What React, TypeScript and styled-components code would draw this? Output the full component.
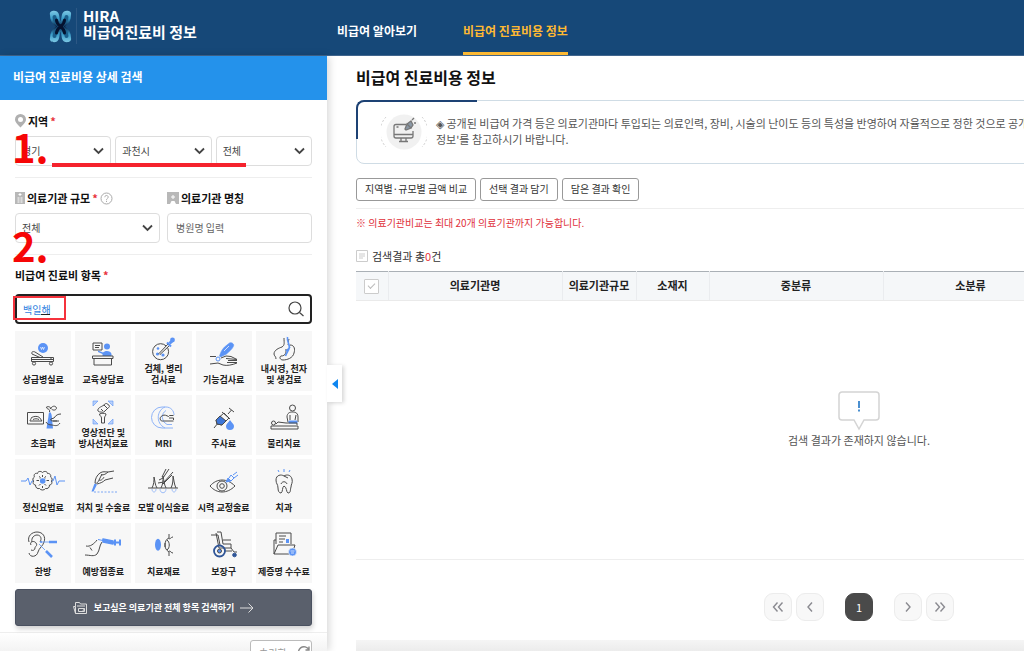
import React, { useState } from "react";
import styled, { createGlobalStyle, css } from "styled-components";

const INK = "#4a4a4a";
const BLUE = "#5b93f5";

const GlobalStyle = createGlobalStyle`
  *, *::before, *::after { box-sizing: border-box; }
  html, body { margin: 0; height: 100%; overflow: hidden; }
  body, button, input, select {
    font-family: "Noto Sans CJK KR", "Noto Sans", sans-serif;
  }
  body { background: #fff; color: #222; }
  button { cursor: pointer; }
`;

const Page = styled.div`
  display: flex;
  flex-direction: column;
  height: 100vh;
  overflow: hidden;
`;

/* ---------- top bar ---------- */

const TopBar = styled.header`
  display: flex;
  flex: none;
  height: 56px;
  background: #164878;
  border-bottom: 1px solid #41668e;
`;

const Brand = styled.a`
  display: flex;
  align-items: center;
  gap: 4px;
  width: 337px;
  padding: 0 0 3px 49px;
  color: #fff;
  text-decoration: none;
`;

const BrandText = styled.span`
  padding: 0 0 4px 6px;
  border-left: 1px solid #2c5784;
  font-size: 15px;
  line-height: 16px;
  font-weight: 700;
`;

const Nav = styled.nav`
  display: flex;
  gap: 46px;
`;

const NavLink = styled.a<{ $active?: boolean }>`
  display: flex;
  align-items: center;
  padding-top: ${(p) => (p.$active ? "9px" : "6px")};
  border-bottom: ${(p) => (p.$active ? "3px solid #fdb933" : "0")};
  color: ${(p) => (p.$active ? "#fdb933" : "#fff")};
  font-size: 12px;
  font-weight: 700;
  text-decoration: none;
  white-space: nowrap;
`;

const Body = styled.div`
  display: flex;
  flex: 1;
  min-height: 0;
`;

/* ---------- search panel ---------- */

const Sidebar = styled.aside`
  position: relative;
  z-index: 1;
  flex: none;
  width: 327px;
  background: #fff;
  box-shadow: 2px 0 8px rgba(0, 0, 0, 0.16);
`;

const PanelTitle = styled.h2`
  display: flex;
  align-items: center;
  height: 44px;
  margin: 0;
  padding: 0 13px 3px;
  background: #2492eb;
  color: #fff;
  font-size: 12px;
  font-weight: 700;
`;

const PanelBody = styled.div`
  position: relative;
  padding: 1px 15px 0;
`;

const Section = styled.section<{ $last?: boolean }>`
  padding: 12px 0 11px;
  border-bottom: ${(p) => (p.$last ? "0" : "1px solid #eee")};
`;

const Label = styled.label`
  display: flex;
  align-items: center;
  gap: 2px;
  height: 16px;
  margin-bottom: 7px;
  color: #111;
  font-size: 11px;
  line-height: 16px;
  font-weight: 700;
  white-space: nowrap;
`;

const Required = styled.span`
  color: #e8323c;
`;

const Columns = styled.div<{ $count: number; $gap: number }>`
  display: grid;
  grid-template-columns: repeat(${(p) => p.$count}, 1fr);
  gap: ${(p) => p.$gap}px;
`;

const field = css`
  display: block;
  width: 100%;
  height: 30px;
  padding: 0 8px;
  border: 1px solid #ddd;
  border-radius: 4px;
  background: #fff;
  color: #444;
  font-size: 10px;
`;

const SelectWrap = styled.div`
  position: relative;
`;

const SelectBox = styled.select`
  ${field}
  padding: 0 6px 2px;
  appearance: none;
`;

const SelectArrow = styled.svg`
  position: absolute;
  top: 11px;
  right: 7px;
  pointer-events: none;
`;

const TextInput = styled.input`
  ${field}
  padding-bottom: 2px;
  &::placeholder { color: #666; opacity: 1; }
`;

const SearchRow = styled.div`
  display: flex;
  align-items: center;
  height: 30px;
  margin: 11px 0 7px;
  padding-right: 6px;
  border: 2px solid #222;
  border-radius: 4px;
`;

const SearchInput = styled.input`
  flex: 1;
  min-width: 0;
  height: 26px;
  padding: 0 6px;
  border: 0;
  outline: 0;
  background: transparent;
  color: #2f7fe0;
  font-size: 10px;
`;

const IconButton = styled.button`
  display: flex;
  padding: 0;
  border: 0;
  background: none;
`;

const Tiles = styled.div`
  display: grid;
  grid-template-columns: repeat(5, 1fr);
  gap: 4px;
`;

const Tile = styled.button<{ $tall: boolean }>`
  display: flex;
  flex-direction: column;
  align-items: center;
  justify-content: flex-end;
  gap: ${(p) => (p.$tall ? "2px" : "7px")};
  height: 60px;
  padding: 0 0 6px;
  border: 0;
  background: #f7f7f7;
  color: #222;
  font-size: 9px;
  line-height: 11px;
  font-weight: 700;
  white-space: nowrap;
`;

const SearchAll = styled.button`
  display: flex;
  align-items: center;
  justify-content: center;
  gap: 6px;
  width: 100%;
  height: 37px;
  margin-top: 6px;
  padding: 0;
  border: 1px solid #4a5160;
  border-radius: 3px;
  background: #5a606c;
  box-shadow: 1px 3px 5px rgba(0, 0, 0, 0.18);
  color: #fff;
  font-size: 9px;
  font-weight: 700;
`;

const PanelFooter = styled.div`
  display: flex;
  justify-content: flex-end;
  margin-top: -5px;
  padding: 7px 15px;
  border-top: 1px solid #eee;
  background: linear-gradient(#fff, #f2f2f2 20px);
`;

const ResetButton = styled.button`
  display: flex;
  align-items: center;
  justify-content: space-between;
  width: 62px;
  height: 24px;
  padding: 0 0 0 8px;
  border: 1px solid #bbb;
  border-radius: 3px;
  background: #fff;
  color: #999;
  font-size: 10px;
`;

const Collapse = styled.button`
  position: absolute;
  top: 309px;
  left: 100%;
  display: flex;
  align-items: center;
  justify-content: center;
  width: 15px;
  height: 37px;
  padding: 0;
  border: 0;
  background: #fff;
  box-shadow: 2px 1px 4px rgba(0, 0, 0, 0.16);
`;

/* ---------- hand-made notes over the panel ---------- */

const StepMark = styled.span<{ $top: number }>`
  position: absolute;
  top: ${(p) => p.$top}px;
  left: 12px;
  color: #f60606;
  font-size: 40px;
  line-height: 40px;
  font-weight: 700;
  pointer-events: none;
`;

const StepLine = styled.span`
  position: absolute;
  top: 63px;
  left: 52px;
  width: 194px;
  height: 4px;
  background: #f5222d;
  pointer-events: none;
`;

const StepFrame = styled.span`
  position: absolute;
  top: 196px;
  left: 13px;
  width: 53px;
  height: 24px;
  border: 2px solid #f5323c;
  pointer-events: none;
`;

const Composing = styled.span`
  position: absolute;
  top: 214px;
  left: 41px;
  width: 9px;
  height: 1px;
  background: #222;
  pointer-events: none;
`;

/* ---------- results ---------- */

const Main = styled.main`
  flex: 1;
  min-width: 0;
  overflow: hidden;
  padding-left: 29px;
`;

const MainInner = styled.div`
  min-width: 1006px;
`;

const Title = styled.h1`
  margin: 0;
  padding: 9px 0 11px;
  color: #111;
  font-size: 16px;
  line-height: 24px;
  font-weight: 700;
`;

const Notice = styled.div`
  position: relative;
  display: flex;
  align-items: center;
  gap: 9px;
  height: 64px;
  padding: 0 24px;
  border: 1px solid #cfdce5;
  border-radius: 8px;
  color: #555;
  font-size: 11px;
  line-height: 16px;
  white-space: nowrap;

  &::before {
    content: "";
    position: absolute;
    top: -1px;
    left: -1px;
    width: 121px;
    height: 39px;
    border-top: 2px solid #1d4274;
    border-left: 2px solid #1d4274;
    border-top-left-radius: 8px;
  }
`;

const NoticeText = styled.p`
  margin: 0;
  padding-bottom: 2px;
`;

const Actions = styled.div`
  display: flex;
  gap: 4px;
  padding: 14px 0 7px;
  border-bottom: 1px solid #eee;
`;

const ActionButton = styled.button`
  height: 23px;
  padding: 0 8px 2px;
  border: 1px solid #999;
  border-radius: 3px;
  background: #fff;
  color: #333;
  font-size: 10px;
  line-height: 16px;
`;

const Limit = styled.p`
  margin: 6px 0 0;
  color: #e0303a;
  font-size: 10px;
  line-height: 16px;
`;

const Count = styled.p`
  display: flex;
  align-items: center;
  gap: 4px;
  margin: 17px 0 7px;
  color: #333;
  font-size: 11px;
  line-height: 16px;
  em { color: #e8323c; font-style: normal; }
`;

const Table = styled.table`
  width: 100%;
  table-layout: fixed;
  border-collapse: collapse;
  border-top: 1px solid #aab0b6;
  border-bottom: 1px solid #eee;
`;

const Th = styled.th`
  height: 29px;
  padding: 0 0 2px;
  border-bottom: 1px solid #eaeaea;
  background: #f5f7f9;
  color: #222;
  font-size: 11px;
  line-height: 16px;
  font-weight: 700;
  & + & { border-left: 1px solid #eaecef; }
`;

const CheckAll = styled.input`
  appearance: none;
  display: block;
  width: 15px;
  height: 15px;
  margin: 2px auto 0;
  border: 1px solid #ccc;
  border-radius: 1px;
  background: #fff;
  &::before {
    content: "";
    display: block;
    width: 7px;
    height: 4px;
    margin: 3px 0 0 3px;
    border-left: 1px solid #bbb;
    border-bottom: 1px solid #bbb;
    transform: rotate(-45deg);
  }
`;

const Empty = styled.td`
  height: 259px;
  padding: 0 0 22px;
  color: #555;
  font-size: 11px;
  line-height: 16px;
  text-align: center;
  svg { display: block; margin: 0 auto 1px; }
`;

const Pager = styled.nav`
  display: flex;
  justify-content: center;
  gap: 21px;
  padding: 33px 0 19px;
`;

const PagerGroup = styled.div`
  display: flex;
  gap: 4px;
`;

const PageButton = styled.button<{ $current?: boolean }>`
  display: flex;
  align-items: center;
  justify-content: center;
  width: 28px;
  height: 28px;
  padding: 0;
  border: 1px solid ${(p) => (p.$current ? "#4a4a4a" : "#ececec")};
  border-radius: 9px;
  background: ${(p) => (p.$current ? "#4a4a4a" : "#f8f8f8")};
  color: #fff;
  font-size: 11px;
`;

const FooterBand = styled.div`
  height: 40px;
  background: linear-gradient(#f5f5f5, #ebebeb 12px);
`;

/* ---------- drawings ---------- */

const ICONS: Record<string, React.ReactNode> = {
  bed: (
    <>
      <circle cx="22" cy="9" r="5" fill={BLUE} stroke="none" />
      <path d="M19.5 8l1 2.5 1-2.5 1 2.5 1-2.5" stroke="#fff" strokeWidth=".7" />
      <path d="M11 15c-1-2 1-3 3-2l8 5M11 15l8 3.500M10.500 18.500h22v4h-22zM10.500 20.500h22M30 18.500v2" />
      <circle cx="13" cy="24.500" r="1.600" /><circle cx="30" cy="24.500" r="1.600" />
    </>
  ),
  desk: (
    <>
      <path d="M12 4h9v7h-9zM14 6.500h5M14 8.500h4" />
      <circle cx="26" cy="7.500" r="3" fill={BLUE} stroke="none" />
      <path d="M17 11.500l5 2c2-2.500 8-2 8.500 1.500v2h-9v-2l-4.500-2z" fill={BLUE} stroke="none" />
      <path d="M11.500 17h20.500v2.500H11.500zM13 19.500h17.500V26H13z" />
    </>
  ),
  dish: (
    <>
      <circle cx="19.600" cy="18.700" r="8" />
      <circle cx="17" cy="15.500" r="1.300" fill={BLUE} stroke="none" />
      <circle cx="16.500" cy="21" r="1.600" fill={BLUE} stroke="none" />
      <circle cx="22" cy="22" r="1.600" fill={BLUE} stroke="none" />
      <path d="M18 20.500l9-9.500 1.500 1.500-9.500 9z" fill="#f7f7f7" />
      <path d="M26 9.500l4 4" stroke={BLUE} strokeWidth="2" />
      <path d="M28.500 10.500l3-3" stroke={BLUE} strokeWidth="3" />
      <circle cx="31.500" cy="7" r="2.400" fill={BLUE} stroke="none" />
    </>
  ),
  hand: (
    <>
      <path d="M17.500 17c1-3 2-6 5-9l5-4c2-1 5 1 4 3-1 3-4 5-7 8l-6 3z" fill={BLUE} stroke={BLUE} strokeWidth=".6" />
      <path d="M22 12l5-5" stroke="#fff" strokeWidth=".7" />
      <circle cx="16" cy="20" r="2" stroke={BLUE} />
      <path d="M8 17.500h6M19 19l5-2 5 .5 6 3M8 25l8-1 5 2c4 1 9 0 14-2M24 19.500l11 1M26 21.500h9M25 23.500h10" />
    </>
  ),
  stomach: (
    <>
      <path d="M22 5c0 5 1 7-2 9-3 1-8 3-8 7 0 2 2 2 2 5M28 12c5 0 5 5 4 8-1 5-7 7-11 7-3 0-4-3-2-4 5 0 5-4 5-7M26 12c1-2 0-4 1-6" />
      <path d="M25.500 4c-1 6 4 8 1 13-1 2-2 3-3 6M24 18c2-2 3-2 4-4" stroke={BLUE} strokeWidth="1.600" />
    </>
  ),
  ultrasound: (
    <>
      <path d="M6.500 9.500h16v11.500h-16zM9 18c0-1 1-1.500 1.500-3.500 3-1.500 6-1.500 8 0L21 18zM12 16.500c2-1 4-1 6 0" />
      <path d="M29 9c-2 1-1 4-2 7l-1.500 9.500h6.500l-1-9.500c0-3-.500-6-2-7z" fill={BLUE} stroke="none" />
      <path d="M28.500 9c1-4-3-2-3-5 3-1 4 0 4 2 1-3 5-4 6-1 0 2-3 3-5 1M40 11c-3 0-5 1-7 4l-3 1c-1 1 0 2 2 2h6M39 20c-2 3-4 3-8 2-3 0-5-1-6-3M32 18h4" />
    </>
  ),
  xray: (
    <>
      <path d="M12 9V4h5zM27 4h5v5zM32 22v5h-5zM17 27h-5v-5z" fill="#b8d0fb" stroke={BLUE} strokeWidth=".6" />
      <path d="M17 14c-1-3 3-4 6-6 1-2 4-2 4 0 2 0 2 2 0 3l-3 3c-2 2-3 1-4 1s-2 0-3-1zM18.500 17c2-1 5-1 6.500 0 0 2-1.500 2-1.500 4v5h-3v-5c0-2-2-2-2-4zM23 8l3 3M20 12l2 2" />
    </>
  ),
  mri: (
    <>
      <path d="M32 25H21a10.500 10.500 0 0 1 0-21h4c5 0 8 4 8 8" stroke="#8fb4f8" />
      <path d="M31 21.500h-5a8 8 0 0 1-1-14M24 4c-8 3-10 16 0 21" stroke="#8fb4f8" />
      <path d="M32.500 12.500h-4l-1 1c-2-1-4-2-6-1s-3 3-2 4.500 2 1 3 1h10M28 15h4.500v2" />
    </>
  ),
  syringe: (
    <>
      <path d="M12 25l4-5M27 5l5 4M29.500 7L26 11M20 9l8 7M22 10l5 5-7 7-5-1-1-4z" />
      <path d="M18 13l6 5-4 4-5-1-1-4z" fill="#3d76d8" stroke={INK} />
      <path d="M28 17c2 3 4 4 4 6a4 4 0 0 1-8 0c0-2 3-4 4-6z" fill={BLUE} stroke="none" />
    </>
  ),
  physio: (
    <>
      <circle cx="30.500" cy="5" r="3" />
      <path d="M26 19l-1-5c0-4 3-5 5-5s6 0 6 5v5M28 12v5M34 12l-1 5" />
      <path d="M27 18h8v2h-8z" fill={BLUE} stroke={BLUE} />
      <circle cx="11.500" cy="20" r="2" />
      <path d="M14 21l2-2 8 1h11v2M9 23h27v3H9z" />
    </>
  ),
  brain: (
    <>
      <path d="M0 14h5l2-3 2 7 2-4h2M30 14h2l2-5 2 9 2-4h6" stroke={BLUE} />
      <path d="M21.500 5.500c-2-2-5-1-5 1-3-1-4 2-3 3.500-2 1-2 3-1 4-1 2 0 4 2 4 0 3 2 4 4 3.500 1 2 5 2 6 0 2 .500 4-.500 4-3.500 2 0 3-2 2-4 1-1 1-3-1-4 1-2-1-4-3-3.500 0-2-3-3-5-1zM18 9.500c1 0 1.500 1 1 2M25 9.500c-1 0-1.500 1-1 2M15.500 13.500H18M25.500 13.500H28M18 18.500l1.500-1.500M25 18.500L23.500 17M21.500 8v2M21.500 19v2" />
      <circle cx="21.700" cy="14" r="2.800" fill={BLUE} stroke="none" />
    </>
  ),
  scalpel: (
    <>
      <path d="M10.500 24.500l3-8 2.500 1-3.500 7z" fill={BLUE} stroke="none" />
      <path d="M14 16c0-4 2-8 5-10 3-2 5-1 8-1M14 16c2 1 3-1 4-3l3-6M16 17c4-1 6-2 8-4l8-2M18 13c2 1 4-1 5-3M20 8c3 0 5-1 7-3l6-1" />
      <path d="M13 25h24" stroke={BLUE} strokeWidth=".8" strokeDasharray="2 1.500" />
    </>
  ),
  hair: (
    <>
      <path d="M7 21h30M11 21c2-4 2-7 2-11 1 4 1 8 3 11M20 21c2-4 2-7 2-12 1 5 1 8 3 12M30 21c2-4 2-8 2-12 1 4 1 8 3 12" />
      <path d="M17 16l6-1 9-10M18 13l4-2 6-9M22 17l9-9M21 10l4-8" />
      <path d="M11 22c0 4 4 4 4 0M19 22c0 5 6 5 6 0M31 22c0 4 4 4 4 0" stroke="#9dbdf8" />
    </>
  ),
  eye: (
    <>
      <path d="M8 19c7-8 17-8 25 0-8 8-18 8-25 0z" />
      <circle cx="20" cy="19" r="5" /><circle cx="20" cy="19" r="2.300" />
      <path d="M24 15l2-4 3 3z" fill={BLUE} stroke={BLUE} />
      <path d="M27 11l2-3 3 3-3 3M31 8l4-3M32 11l4-3" stroke={BLUE} />
    </>
  ),
  tooth: (
    <>
      <path d="M22 9c-3-2-8-1-8 4 0 4 2 4 2 8 0 3 1 5 3 5 2-1 1-6 3-7 3 1 2 6 4 7 3 0 2-3 3-6 0-3 2-4 1-8-1-4-5-5-8-3zM22 9l4 2M19 17c1-3 5-3 6 0" />
      <path d="M22 2v3M16 3l1 2M28 3l-1 2" stroke={BLUE} />
    </>
  ),
  ear: (
    <>
      <path d="M8 11C6 5 11 1 16 1c6 0 9 5 7 10-1 4-5 6-6 10-1 5-8 6-9 1M11 11c-1-4 2-7 5-7 4 0 5 4 3 7M10 14c-2-3 3-5 5-2s-1 3-1 5-2 3-4 2" />
      <path d="M20 11h8M18 13l6 6" stroke={BLUE} strokeWidth=".8" />
      <circle cx="20" cy="11" r="1" fill={BLUE} stroke="none" />
      <path d="M28 11h8M25 20l6 6" stroke={BLUE} strokeWidth="2.600" />
    </>
  ),
  vaccine: (
    <>
      <path d="M5 15c4 1 8-2 11-6M4 24c5 0 9 2 12-1 3-4 2-8 5-12M9 16.500l2 3" />
      <path d="M17 8.500l5 1" stroke={BLUE} strokeWidth="1" />
      <path d="M22 8l10 2v3l-10-2z" fill={BLUE} stroke={BLUE} strokeWidth="1.600" />
      <path d="M32 11.500h7M34 8.500v6M39 8.500v6" stroke={BLUE} strokeWidth="2" />
    </>
  ),
  lens: (
    <>
      <ellipse cx="17" cy="13.700" rx="3" ry="6" fill={BLUE} stroke="none" />
      <path d="M28 3v4c-3 1-4 4-4 7s1 5 4 7v4M26 9c3 2 3 8 0 10M28 8c3-1 2-2 4-2M28 20c2 0 2 2 4 2M24 12v4" />
    </>
  ),
  wheelchair: (
    <>
      <path d="M9 4h7l2 10M15 1h4l2 12h8v4H17L14 2M21 9h8M29 17l3 4h3M22 20h8" />
      <circle cx="17.500" cy="20" r="5.500" stroke="#2f5597" strokeWidth="1.800" />
      <circle cx="17.500" cy="20" r="2" fill={BLUE} />
      <circle cx="32.500" cy="24" r="1.800" fill="#2f5597" stroke="#2f5597" />
    </>
  ),
  document: (
    <>
      <path d="M14 13V2h15v11M17 5h7M17 8h6M17 11h4" />
      <path d="M24 8h3v4h-3z" fill={BLUE} stroke="none" />
      <path d="M14 9h-2v14h18l3-9H16l-4 9" />
      <circle cx="30.500" cy="21" r="4" fill={BLUE} stroke="#f7f7f7" strokeWidth=".6" />
      <path d="M28.500 20h4M29 22h3" stroke="#fff" strokeWidth=".7" />
    </>
  ),
};

const TREATMENTS: { icon: string; lines: string[] }[] = [
  { icon: "bed", lines: ["상급병실료"] },
  { icon: "desk", lines: ["교육상담료"] },
  { icon: "dish", lines: ["검체, 병리", "검사료"] },
  { icon: "hand", lines: ["기능검사료"] },
  { icon: "stomach", lines: ["내시경, 천자", "및 생검료"] },
  { icon: "ultrasound", lines: ["초음파"] },
  { icon: "xray", lines: ["영상진단 및", "방사선치료료"] },
  { icon: "mri", lines: ["MRI"] },
  { icon: "syringe", lines: ["주사료"] },
  { icon: "physio", lines: ["물리치료"] },
  { icon: "brain", lines: ["정신요법료"] },
  { icon: "scalpel", lines: ["처치 및 수술료"] },
  { icon: "hair", lines: ["모발 이식술료"] },
  { icon: "eye", lines: ["시력 교정술료"] },
  { icon: "tooth", lines: ["치과"] },
  { icon: "ear", lines: ["한방"] },
  { icon: "vaccine", lines: ["예방접종료"] },
  { icon: "lens", lines: ["치료재료"] },
  { icon: "wheelchair", lines: ["보장구"] },
  { icon: "document", lines: ["제증명 수수료"] },
];

const WINGS =
  "M1 5C0 1 5 0 8 1.500c3 2 2 7 3.500 10C13 8.500 12 3.500 15 1.500c3-1.500 8-.5 7 3.500 0 5-2 9-6 11.500 4 2.500 6 6.500 6 11.500 1 4-4 5-7 3.500-3-2-2-7-3.500-10-1.500 3-.5 8-3.500 10C5 33 0 32 1 28c0-5 2-9 6-11.500C3 14 1 10 1 5z";

function Logo() {
  return (
    <svg width="23" height="33" viewBox="0 0 23 33" aria-hidden="true">
      <defs>
        <linearGradient id="wing" x1="0" y1="0" x2="0" y2="1">
          <stop offset="0" stopColor="#7cc8e4" />
          <stop offset="0.25" stopColor="#3a9cc8" />
          <stop offset="0.5" stopColor="#0a2346" />
          <stop offset="0.75" stopColor="#3a9cc8" />
          <stop offset="1" stopColor="#7cc8e4" />
        </linearGradient>
      </defs>
      <path fill="url(#wing)" d={WINGS} />
      <g fill="none" strokeLinecap="round">
        <path d="M5.500 7c0 4 3 7 6 9.500 3-2.500 6-5.500 6-9.500M5.500 26c0-4 3-7 6-9.500 3 2.500 6 5.500 6 9.500" stroke="#1a5f8c" strokeWidth="4" />
        <path d="M7.500 10c0 3 2 5 4 6.500 2-1.500 4-3.500 4-6.500M7.500 23c0-3 2-5 4-6.500 2 1.500 4 3.500 4 6.500" stroke="#04122f" strokeWidth="3" />
      </g>
    </svg>
  );
}

function Dropdown({ id, label, value }: { id: string; label?: string; value: string }) {
  return (
    <SelectWrap>
      <SelectBox id={id} aria-label={label} defaultValue={value}>
        <option>{value}</option>
      </SelectBox>
      <SelectArrow width="11" height="8" viewBox="0 0 11 8" fill="none" stroke="#444" strokeWidth="1.8">
        <path d="M1 1.500l4.500 4.500L10 1.500" />
      </SelectArrow>
    </SelectWrap>
  );
}

function Chevrons({ double, right }: { double?: boolean; right?: boolean }) {
  const single = right ? "M4 1.500l4 4.500-4 4.500" : "M8 1.500L4 6l4 4.500";
  const pair = right ? "M1.500 1.500L5.500 6l-4 4.500M6.500 1.500l4 4.500-4 4.500" : "M5.500 1.500L1.500 6l4 4.500M10.500 1.500L6.500 6l4 4.500";
  return (
    <svg width="12" height="12" viewBox="0 0 12 12" fill="none" stroke="#8a8a90" strokeWidth="1.4">
      <path d={double ? pair : single} />
    </svg>
  );
}

export default function App() {
  const [query, setQuery] = useState("백일해");

  return (
    <>
      <GlobalStyle />
      <Page>
        <TopBar>
          <Brand href="#">
            <Logo />
            <BrandText>
              HIRA
              <br />
              비급여진료비 정보
            </BrandText>
          </Brand>
          <Nav>
            <NavLink href="#">비급여 알아보기</NavLink>
            <NavLink href="#" $active>비급여 진료비용 정보</NavLink>
          </Nav>
        </TopBar>

        <Body>
          <Sidebar>
            <PanelTitle>비급여 진료비용 상세 검색</PanelTitle>
            <PanelBody>
              <Section>
                <Label htmlFor="province">
                  <svg width="11" height="14" viewBox="0 0 11 14" aria-hidden="true">
                    <path d="M5.500 0a5.500 5.500 0 0 1 5.500 5.500c0 3-3 5-5.500 8C3 10.500 0 8.500 0 5.500A5.500 5.500 0 0 1 5.500 0z" fill="#b0b0b0" />
                    <circle cx="5.500" cy="5.500" r="2.500" fill="#fff" />
                  </svg>
                  <span>지역</span>
                  <Required>*</Required>
                </Label>
                <Columns $count={3} $gap={4}>
                  <Dropdown id="province" value="경기" />
                  <Dropdown id="city" label="시군구" value="과천시" />
                  <Dropdown id="town" label="읍면동" value="전체" />
                </Columns>
              </Section>

              <Section>
                <Columns $count={2} $gap={7}>
                  <div>
                    <Label htmlFor="scale">
                      <svg width="10" height="12" viewBox="0 0 10 12" aria-hidden="true">
                        <path d="M0 0h10v12H0z" fill="#b8b8b8" />
                        <path d="M5 1v3M3.500 2.500h3M2.500 6h2M5.500 6h2M2.500 8h2M5.500 8h2M2.500 10h2M5.500 10h2" stroke="#fff" />
                      </svg>
                      <span>의료기관 규모</span>
                      <Required>*</Required>
                      <svg width="13" height="13" viewBox="0 0 13 13" fill="none" stroke="#aaa" aria-hidden="true">
                        <circle cx="6.500" cy="6.500" r="5.500" />
                        <path d="M4.800 5.200c0-2.400 3.500-2.200 3.400 0 0 1.200-1.700 1.300-1.700 2.600M6.500 8.800v1.200" />
                      </svg>
                    </Label>
                    <Dropdown id="scale" value="전체" />
                  </div>
                  <div>
                    <Label htmlFor="name">
                      <svg width="12" height="12" viewBox="0 0 12 12" aria-hidden="true">
                        <path d="M0 0h12v12H9L7.500 9h-3L3 12H0z" fill="#b8b8b8" />
                        <path d="M6 3v4M4 5h4" stroke="#fff" />
                      </svg>
                      <span>의료기관 명칭</span>
                    </Label>
                    <TextInput id="name" placeholder="병원명 입력" />
                  </div>
                </Columns>
              </Section>

              <Section $last>
                <Label htmlFor="item">
                  <span>비급여 진료비 항목</span>
                  <Required>*</Required>
                </Label>
                <SearchRow>
                  <SearchInput id="item" value={query} onChange={(e) => setQuery(e.target.value)} />
                  <IconButton aria-label="검색">
                    <svg width="16" height="16" viewBox="0 0 16 16" fill="none" stroke="#444" strokeWidth="1.2">
                      <circle cx="7" cy="7" r="6" />
                      <path d="M11.500 11.500L15.500 15" />
                    </svg>
                  </IconButton>
                </SearchRow>
                <Tiles>
                  {TREATMENTS.map((t) => (
                    <Tile key={t.icon} $tall={t.lines.length > 1}>
                      <svg width="44" height="28" viewBox="0 0 44 28" fill="none" stroke={INK} strokeWidth="1" strokeLinejoin="round" aria-hidden="true">
                        {ICONS[t.icon]}
                      </svg>
                      <span>
                        {t.lines.map((line, i) => (
                          <React.Fragment key={line}>
                            {i > 0 && <br />}
                            {line}
                          </React.Fragment>
                        ))}
                      </span>
                    </Tile>
                  ))}
                </Tiles>
                <SearchAll>
                  <svg width="15" height="12" viewBox="0 0 15 12" fill="none" stroke="#ddd" aria-hidden="true">
                    <path d="M2.500 11.500L.5 4.500h2M2.500 4.500v-4h4l1 1.500h6v9.500h-11zM4 4h8M5.500 6.500h6v3h-6zM11.500 6.500l-2 3" />
                  </svg>
                  보고싶은 의료기관 전체 항목 검색하기
                  <svg width="14" height="10" viewBox="0 0 14 10" fill="none" stroke="#ddd" aria-hidden="true">
                    <path d="M0 5h13M8.500 .5L13 5 8.500 9.500" />
                  </svg>
                </SearchAll>
              </Section>

              <StepMark $top={26}>1.</StepMark>
              <StepLine />
              <StepMark $top={125}>2.</StepMark>
              <StepFrame />
              <Composing />
            </PanelBody>
            <PanelFooter>
              <ResetButton>
                초기화
                <svg width="14" height="14" viewBox="0 0 14 14" fill="none" stroke="#888" strokeWidth="1.4" aria-hidden="true">
                  <path d="M12 9.500A5.500 5.500 0 1 1 12 5M12 1.500V5H8.500" />
                </svg>
              </ResetButton>
            </PanelFooter>
            <Collapse aria-label="검색 영역 접기">
              <svg width="6" height="10" viewBox="0 0 6 10">
                <path d="M6 0v10L0 5z" fill="#0f86f0" />
              </svg>
            </Collapse>
          </Sidebar>

          <Main>
            <MainInner>
              <Title>비급여 진료비용 정보</Title>
              <Notice>
                <svg width="46" height="36" viewBox="0 0 46 36" fill="none" aria-hidden="true">
                  <circle cx="23" cy="18" r="17.500" fill="#f1f1f1" />
                  <path d="M5 3a22 22 0 0 0 0 30M41 3a22 22 0 0 1 0 30" stroke="#ccc" strokeDasharray="2 2" />
                  <g stroke="#777" strokeWidth="1.3">
                    <path d="M25 10.500H15a2 2 0 0 0-2 2V22a2 2 0 0 0 2 2h15a2 2 0 0 0 2-2v-5M13 20.500h19M20 24v3.500M25 24v3.500M18 27.500h9M15.500 13h2" />
                    <path d="M24 15l2-5 4 4-5 2zM26 10l4-3 2 4-2 3M31 6l2-2M33 9l2 0" fill="#8a98a6" />
                  </g>
                </svg>
                <NoticeText>
                  ◈ 공개된 비급여 가격 등은 의료기관마다 투입되는 의료인력, 장비, 시술의 난이도 등의 특성을 반영하여 자율적으로 정한 것으로 공개된 비
                  <br />
                  정보'를 참고하시기 바랍니다.
                </NoticeText>
              </Notice>
              <Actions>
                <ActionButton>지역별·규모별 금액 비교</ActionButton>
                <ActionButton>선택 결과 담기</ActionButton>
                <ActionButton>담은 결과 확인</ActionButton>
              </Actions>
              <Limit>※ 의료기관비교는 최대 20개 의료기관까지 가능합니다.</Limit>
              <Count>
                <svg width="12" height="12" viewBox="0 0 12 12" fill="none" stroke="#ccc" aria-hidden="true">
                  <path d="M.5 .5h11v11H.5zM3 4h6M3 6h6M3 8h4" />
                </svg>
                <span>
                  검색결과 총<em>0</em>건
                </span>
              </Count>
              <Table>
                <colgroup>
                  <col style={{ width: 32 }} />
                  <col style={{ width: 174 }} />
                  <col style={{ width: 74 }} />
                  <col style={{ width: 73 }} />
                  <col style={{ width: 174 }} />
                  <col style={{ width: 175 }} />
                  <col />
                </colgroup>
                <thead>
                  <tr>
                    <Th><CheckAll type="checkbox" aria-label="전체 선택" /></Th>
                    <Th>의료기관명</Th>
                    <Th>의료기관규모</Th>
                    <Th>소재지</Th>
                    <Th>중분류</Th>
                    <Th>소분류</Th>
                    <Th />
                  </tr>
                </thead>
                <tbody>
                  <tr>
                    <Empty colSpan={7}>
                      <svg width="42" height="40" viewBox="0 0 42 40" fill="none" aria-hidden="true">
                        <path d="M4 1h34a3 3 0 0 1 3 3v22a3 3 0 0 1-3 3H26l-5 9-5-9H4a3 3 0 0 1-3-3V4a3 3 0 0 1 3-3z" stroke="#d4d4d4" strokeWidth="1.5" fill="#fff" />
                        <path d="M21 10v7M21 18.500v2" stroke="#4a8fd0" strokeWidth="2" />
                      </svg>
                      검색 결과가 존재하지 않습니다.
                    </Empty>
                  </tr>
                </tbody>
              </Table>
              <Pager aria-label="페이지">
                <PagerGroup>
                  <PageButton aria-label="처음"><Chevrons double /></PageButton>
                  <PageButton aria-label="이전"><Chevrons /></PageButton>
                </PagerGroup>
                <PageButton $current>1</PageButton>
                <PagerGroup>
                  <PageButton aria-label="다음"><Chevrons right /></PageButton>
                  <PageButton aria-label="마지막"><Chevrons double right /></PageButton>
                </PagerGroup>
              </Pager>
              <FooterBand />
            </MainInner>
          </Main>
        </Body>
      </Page>
    </>
  );
}
